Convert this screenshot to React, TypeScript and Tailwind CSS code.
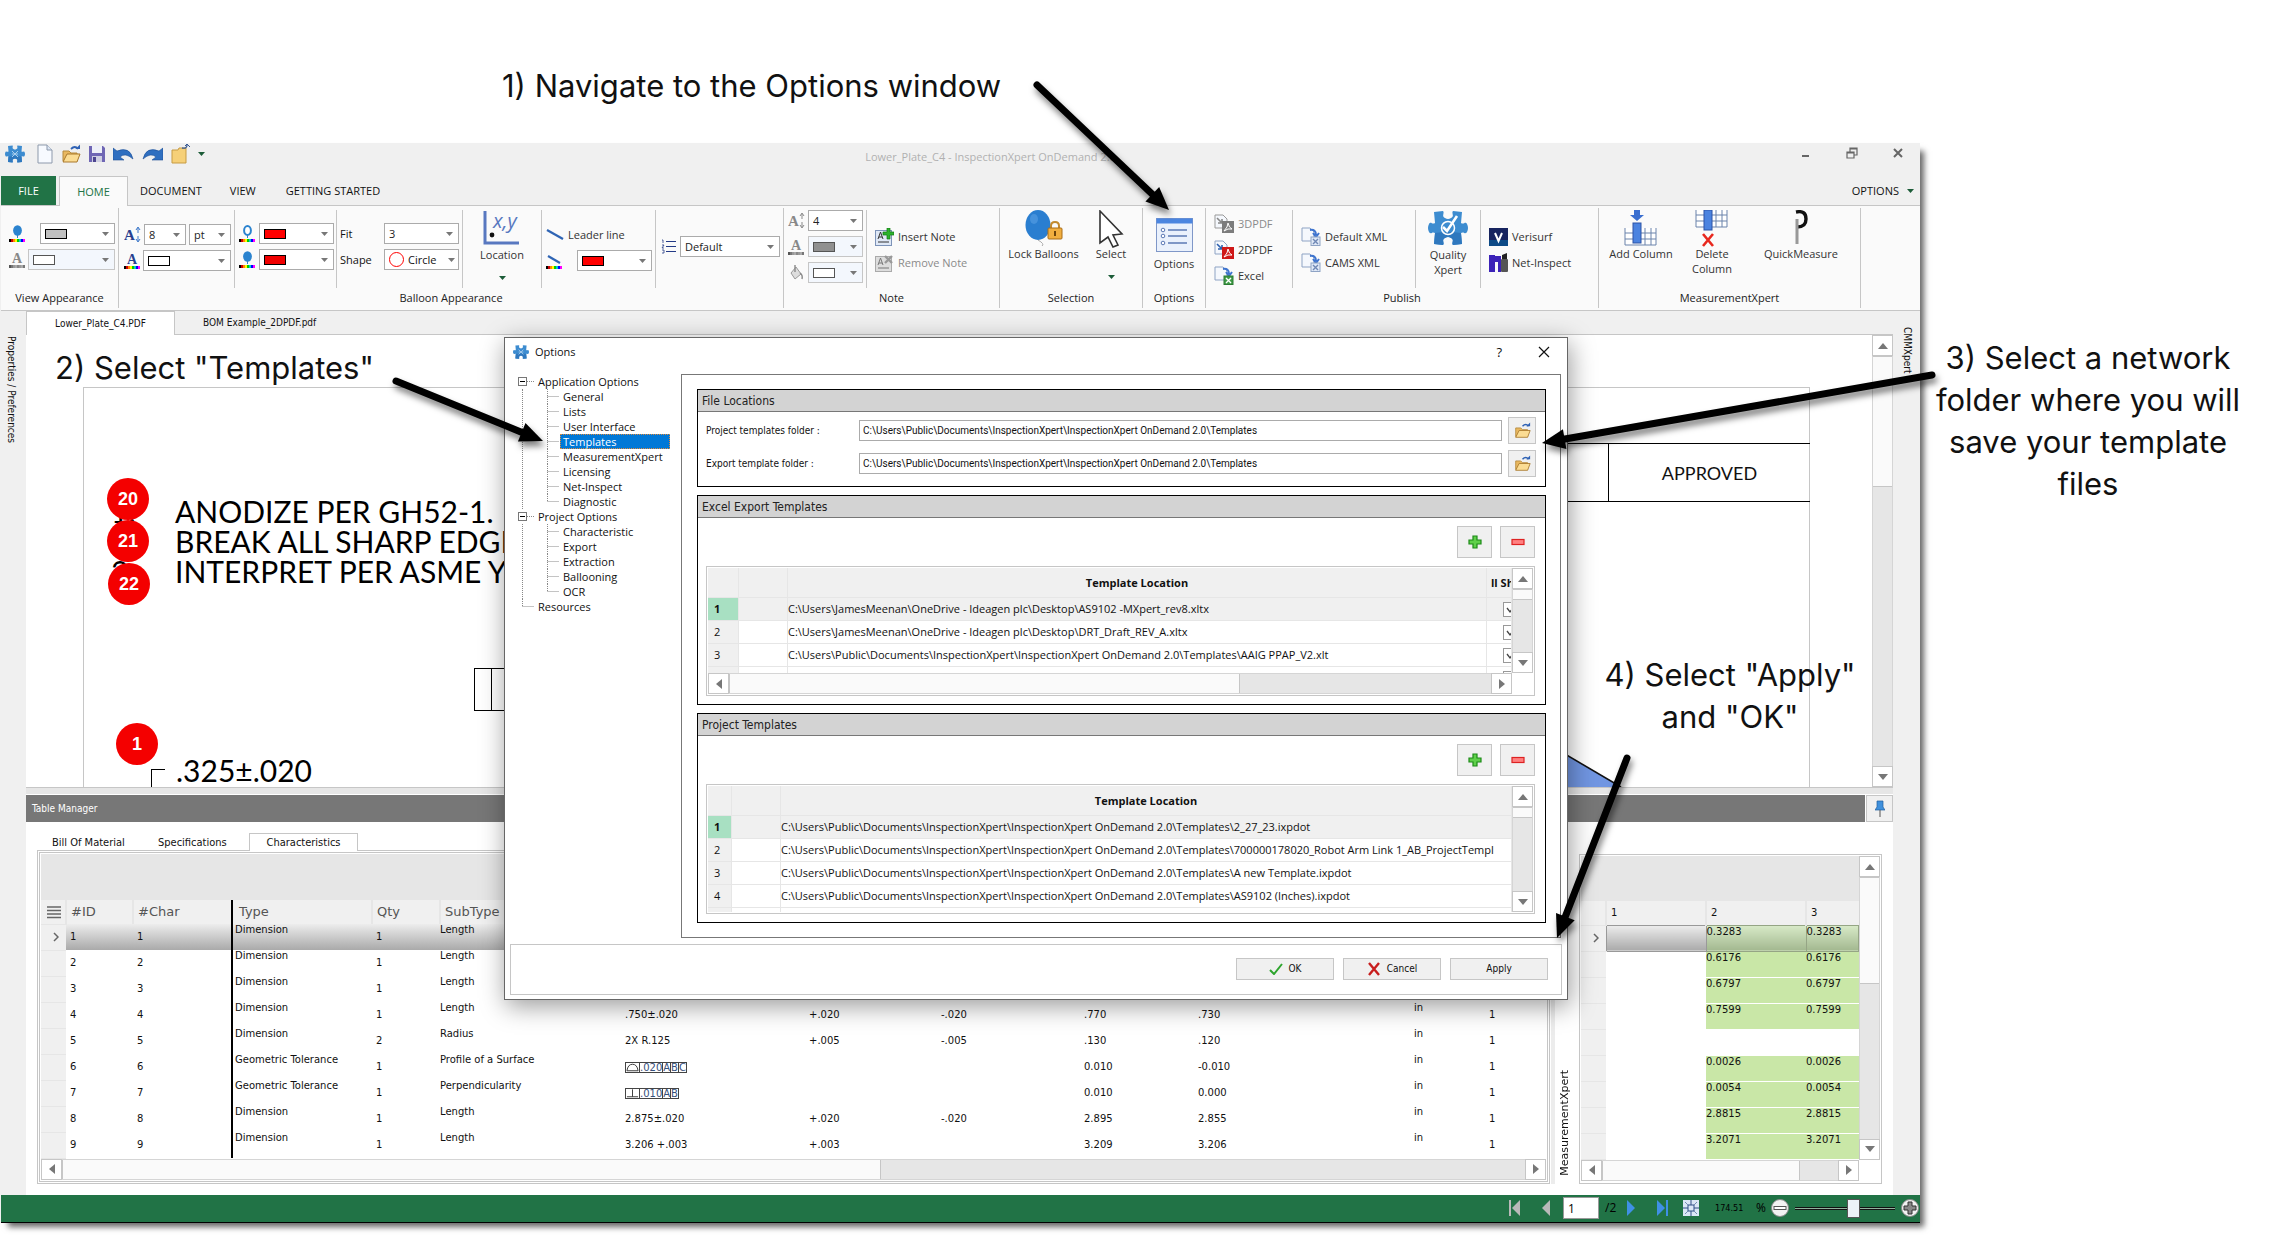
import type { ReactNode } from 'react'
import { clsx } from 'clsx'

const SEGOE = "font-['Open_Sans','Noto_Sans',sans-serif]"
const TAHOMA = "font-['DejaVu_Sans_Condensed','DejaVu_Sans',sans-serif]"
const VERDANA = "font-['DejaVu_Sans',sans-serif]"
const NOTE = "font-['Inter','Open_Sans',sans-serif] text-[31px] leading-[42px]"
const GOTHIC = "font-['Lato',sans-serif]"

/* ---------- icons ---------- */

function PuzzleIcon({ className, check }: { className: string; check?: boolean }) {
  return (
    <svg viewBox="0 0 40 34" className={className}>
      <path
        d="M6 1 L15 0 C17 2 13 5 17 7 Q20 9 23 7 C27 5 23 2 25 0 L34 1 L33 12 C36 14 37 10 39 13 Q41 17 39 21 C37 24 36 20 33 22 L34 33 L25 34 C23 32 27 29 23 27 Q20 25 17 27 C13 29 17 32 15 34 L6 33 L7 22 C4 20 3 24 1 21 Q-1 17 1 13 C3 10 4 14 7 12 Z"
        fill="#3d8cd0"
      />
      <path d="M6 33 L7 22 Q20 20 33 22 L34 33 L25 34 C23 32 27 29 23 27 Q20 25 17 27 C13 29 17 32 15 34 Z" fill="#2f78be" />
      {check ? (
        <g fill="none" stroke="#fff">
          <circle cx="20" cy="17" r="6.5" strokeWidth="1.5" />
          <path d="M15 16 L19 20 L29 5" strokeWidth="2.6" />
        </g>
      ) : (
        <path d="M14 11 L26 23 M26 11 L14 23 M14 17 H26" stroke="#a9cdec" strokeWidth="2" />
      )}
    </svg>
  )
}

function NewFileIcon() {
  return (
    <svg viewBox="0 0 16 20" className="h-5 w-4">
      <path d="M1 1 H10 L15 6 V19 H1 Z" fill="#f7faff" stroke="#8d99ab" />
      <path d="M10 1 V6 H15" fill="#dbe6f5" stroke="#8d99ab" />
    </svg>
  )
}

function OpenIcon({ className = 'h-5 w-5' }: { className?: string }) {
  return (
    <svg viewBox="0 0 20 20" className={className}>
      <path d="M2 7 H8 L10 9 H16 V17 H2 Z" fill="#e9b860" stroke="#b68a3c" />
      <path d="M2 18 L6 10 H19 L16 18 Z" fill="#fbdc93" stroke="#a9792c" />
      <path d="M10 5 Q14 1 17 5" fill="none" stroke="#2f62b5" strokeWidth="1.8" />
      <path d="M14.5 5 H19 V0.5 Z" fill="#2f62b5" />
    </svg>
  )
}

function SaveIcon() {
  return (
    <svg viewBox="0 0 16 18" className="h-[18px] w-4">
      <path d="M0 1 H14 L16 3 V17 H0 Z" fill="#6f66b4" />
      <rect x="3" y="1" width="10" height="7" fill="#eef0f8" />
      <rect x="3" y="11" width="10" height="6" fill="#cfcfe2" />
      <rect x="4" y="12" width="3" height="5" fill="#4d4590" />
    </svg>
  )
}

function TurnIcon({ flip }: { flip?: boolean }) {
  return (
    <svg viewBox="0 0 21 14" className={clsx('h-3.5 w-[21px]', flip && '-scale-x-100')}>
      <path d="M0 1 V13 H11 L7 10 Q12 5 20 12 Q17 -1 4 4 Z" fill="#2f6fc0" stroke="#1e4f96" strokeWidth="0.6" />
    </svg>
  )
}

function ExportFolderIcon() {
  return (
    <svg viewBox="0 0 19 20" className="h-5 w-[19px]">
      <path d="M1 6 H7 L8 4 H15 V19 H1 Z" fill="#f6d078" stroke="#c79b43" />
      <path d="M11 4 Q16 5 16 1" fill="none" stroke="#3a5b95" strokeWidth="1.3" />
      <path d="M14 2 L16 0 L19 3" fill="none" stroke="#3a5b95" />
    </svg>
  )
}

const RAINBOW = ['#000', '#c00', '#f80', '#ff0', '#0c0', '#0cc', '#00f', '#f0f']
const GRAYS = ['#555', '#777', '#999', '#aaa', '#888', '#999', '#aaa', '#777']

function Stripe({ gray }: { gray?: boolean }) {
  return (
    <>
      {(gray ? GRAYS : RAINBOW).map((c, i) => (
        <rect key={i} x={i * 2} y="14" width="2" height="3" fill={c} />
      ))}
    </>
  )
}

function BalloonColorIcon({ hollow }: { hollow?: boolean }) {
  return (
    <svg viewBox="0 0 16 17" className="h-[17px] w-4 shrink-0">
      <ellipse cx="8.5" cy="5.5" rx={hollow ? 3.4 : 4.4} ry={hollow ? 4.4 : 5.2} fill={hollow ? '#fff' : '#2b83cf'} stroke="#2b83cf" strokeWidth={hollow ? 2 : 0} />
      <path d="M8.5 10 V13" stroke="#2b83cf" />
      <Stripe />
    </svg>
  )
}

function LetterColorIcon({ gray }: { gray?: boolean }) {
  return (
    <svg viewBox="0 0 16 17" className="h-[17px] w-4 shrink-0">
      <text x="3" y="12" fontSize="14" fontWeight="bold" fontFamily="Liberation Serif, serif" fill={gray ? '#888' : '#27408f'}>
        A
      </text>
      <Stripe gray={gray} />
    </svg>
  )
}

function LetterSizeIcon({ gray }: { gray?: boolean }) {
  const c = gray ? '#888' : '#27408f'
  return (
    <svg viewBox="0 0 17 17" className="h-[17px] w-[17px] shrink-0">
      <text x="0" y="14" fontSize="15" fontWeight="bold" fontFamily="Liberation Serif, serif" fill={c}>
        A
      </text>
      <path d="M14 2 V7 M14 10 V15 M12 4 L14 1 L16 4 M12 13 L14 16 L16 13" fill="none" stroke={gray ? '#888' : '#3a76c9'} />
    </svg>
  )
}

function LineIcon({ color }: { color?: boolean }) {
  return (
    <svg viewBox="0 0 18 17" className="h-[17px] w-[18px] shrink-0">
      <path d={color ? 'M2 4 L14 11' : 'M1 4 L17 13'} stroke="#2e64b4" strokeWidth="2.2" />
      {color && <Stripe />}
    </svg>
  )
}

function ListIcon() {
  return (
    <svg viewBox="0 0 15 15" className="h-[15px] w-[15px] shrink-0">
      <path d="M5 2.5 H15 M5 7.5 H15 M5 12.5 H15" stroke="#233a86" />
      <path d="M1 1 H2 V4 M1 6 H3 L1 9 H3 M1 11 H3 V14 H1" fill="none" stroke="#233a86" strokeWidth="0.8" />
    </svg>
  )
}

function BucketIcon() {
  return (
    <svg viewBox="0 0 16 17" className="h-[17px] w-4 shrink-0">
      <path d="M3 9 L8 3 L13 10 L7 15 Z" fill="#ddd" stroke="#999" />
      <path d="M7 1 V8 M12 9 Q15 11 14 15" fill="none" stroke="#888" strokeWidth="1.4" />
    </svg>
  )
}

function NoteIcon({ remove }: { remove?: boolean }) {
  return (
    <svg viewBox="0 0 19 18" className="h-[18px] w-[19px] shrink-0">
      <rect x="0.5" y="2.5" width="16" height="15" fill={remove ? '#ddd' : '#dfe8f6'} stroke={remove ? '#aaa' : '#7d93b8'} />
      <path d="M3 11 L5.5 4 L8 11 M4 9 H7 M3 14 H14" fill="none" stroke={remove ? '#777' : '#333'} />
      {remove ? (
        <path d="M10 2 L17 9 M17 2 L10 9" stroke="#999" strokeWidth="2.4" />
      ) : (
        <path d="M12 0 H15 V4 H19 V7 H15 V11 H12 V7 H8 V4 H12 Z" fill="#2db32d" stroke="#127a12" strokeWidth="0.7" />
      )}
    </svg>
  )
}

function LocationIcon() {
  return (
    <svg viewBox="0 0 38 34" className="h-[34px] w-[38px]">
      <path d="M2 0 V32 H36" fill="none" stroke="#5878c0" strokeWidth="3" />
      <circle cx="9" cy="24" r="2.4" fill="#111" />
      <text x="10" y="17" fontSize="20" fontStyle="italic" fontFamily="Open Sans, sans-serif" fill="#5878c0">
        x,y
      </text>
    </svg>
  )
}

function LockBalloonsIcon() {
  return (
    <svg viewBox="0 0 38 36" className="h-9 w-[38px]">
      <path d="M13 30 Q20 34 17 36" fill="none" stroke="#aaa" />
      <ellipse cx="13" cy="15" rx="12.5" ry="15" fill="#2a7ed0" />
      <ellipse cx="9" cy="9" rx="4" ry="5" fill="#4692dc" />
      <path d="M26 19 V16 Q26 12 30 12 Q34 12 34 16 V19" fill="none" stroke="#c28a2e" strokeWidth="2" />
      <rect x="23" y="18" width="14" height="11" rx="1" fill="#f1ae3f" stroke="#a96c17" />
      <path d="M30 21 V26" stroke="#6c430b" strokeWidth="2" />
    </svg>
  )
}

function CursorIcon() {
  return (
    <svg viewBox="0 0 26 38" className="h-[38px] w-[26px]">
      <path d="M2 1 L24 24 L15 25 L20 35 L15 37 L10 27 L2 33 Z" fill="#fff" stroke="#333" strokeWidth="1.6" />
    </svg>
  )
}

function OptionsIcon() {
  return (
    <svg viewBox="0 0 37 34" className="h-[34px] w-[37px]">
      <rect x="0.5" y="0.5" width="36" height="33" fill="#eaf1fc" stroke="#7f97c8" />
      <rect x="0.5" y="0.5" width="36" height="5" fill="#4c86e0" />
      {[12, 18, 25].map((y) => (
        <g key={y}>
          <circle cx="7" cy={y} r="1.8" fill="#fff" stroke="#5b78b4" />
          <path d={`M12 ${y} H31`} stroke="#5b78b4" strokeWidth="1.5" />
        </g>
      ))}
    </svg>
  )
}

function FileExportIcon({ kind }: { kind: 'pdf' | 'pdfGray' | 'excel' | 'xml' }) {
  const pdf = kind === 'pdf' || kind === 'pdfGray'
  return (
    <svg viewBox="0 0 20 19" className="h-[19px] w-5 shrink-0">
      <path d="M1 1 H9 L13 5 V14 H1 Z" fill="#f5f8fd" stroke={kind === 'pdfGray' ? '#999' : '#8ea3c4'} />
      {pdf ? (
        <>
          <path d="M3 4 L8 9 M8 5 V9 H4" fill="none" stroke={kind === 'pdf' ? '#2b5fae' : '#888'} strokeWidth="1.6" />
          <rect x="8" y="7" width="12" height="12" fill={kind === 'pdf' ? '#cf1717' : '#7c7c7c'} />
          <path d="M10 17 Q14 13 14 9 Q15 14 18 15 Q14 14 10 17" fill="none" stroke="#fff" />
        </>
      ) : (
        <>
          <path d="M9 3 Q15 2 15 8 M12 6 L15 10 L18 6" fill="none" stroke="#3e74cf" strokeWidth="2" />
          <rect x="10" y="10" width="9" height="8.5" fill={kind === 'excel' ? '#3f9b46' : '#dfe8f6'} stroke={kind === 'excel' ? '#2c7a33' : '#8ea3c4'} />
          <path d="M12 12 L17 17 M17 12 L12 17" stroke={kind === 'excel' ? '#fff' : '#6f88b5'} strokeWidth="1.4" />
        </>
      )}
    </svg>
  )
}

function VerisurfIcon() {
  return (
    <svg viewBox="0 0 19 18" className="h-[18px] w-[19px] shrink-0">
      <rect width="19" height="18" fill="#17245f" />
      <rect y="12" width="19" height="6" fill="#0d4a86" />
      <path d="M6 5 L9.5 13 L13 5" fill="none" stroke="#fff" strokeWidth="2" />
    </svg>
  )
}

function NetInspectIcon() {
  return (
    <svg viewBox="0 0 19 19" className="h-[19px] w-[19px] shrink-0">
      <path d="M0 2 H6 V19 H0 Z M6 3 H12 V19 H9 V9 H6 Z" fill="#3c23b8" />
      <rect x="12" y="6" width="7" height="13" rx="1" fill="#555" />
      <path d="M13 6 V2 L18 0 V6 Z" fill="#222" />
    </svg>
  )
}

function ColumnIcon({ remove }: { remove?: boolean }) {
  const y = remove ? 0 : 18
  return (
    <svg viewBox="0 0 34 37" className="h-[37px] w-[34px]">
      <rect x="1" y={y} width="31" height="17" fill="#fff" />
      <path d={`M1 ${y} V${y + 17} H32 V${y} M1 ${y + 5} H32 M1 ${y + 11} H32 M21 ${y} V${y + 17} M27 ${y} V${y + 17}`} fill="none" stroke="#6b83ab" />
      <rect x="9" y={remove ? 0 : 13} width="8" height="20" fill="#4b83e0" stroke="#2c53a5" />
      {remove ? <path d="M8 24 L18 36 M18 24 L8 36" stroke="#e8281e" strokeWidth="2.6" /> : <path d="M10 0 H16 V5 H20 L13 11 L6 5 H10 Z" fill="#3b6fd0" />}
    </svg>
  )
}

function QuickMeasureIcon() {
  return (
    <svg viewBox="0 0 16 37" className="h-[37px] w-4">
      <path d="M3 2 Q13 0 13 9 Q13 17 4 17" fill="none" stroke="#111" strokeWidth="3.4" />
      <path d="M4 9 V34" stroke="#999" strokeWidth="3" />
    </svg>
  )
}

function PlusIcon() {
  return (
    <svg viewBox="0 0 14 14" className="h-3.5 w-3.5">
      <path d="M5 1 H9 V5 H13 V9 H9 V13 H5 V9 H1 V5 H5 Z" fill="#5fd04a" stroke="#1c8a17" strokeWidth="1.2" />
    </svg>
  )
}

function MinusIcon() {
  return (
    <svg viewBox="0 0 14 14" className="h-3.5 w-3.5">
      <rect x="1" y="4.5" width="12" height="5" fill="#ff8080" stroke="#dd2222" strokeWidth="1.2" />
    </svg>
  )
}

function PinIcon() {
  return (
    <svg viewBox="0 0 10 17" className="h-[17px] w-2.5">
      <path d="M2 1 H8 V7 L10 10 H0 L2 7 Z" fill="#3f90dc" stroke="#215f9e" strokeWidth="0.7" />
      <path d="M5 10 V17" stroke="#555" />
    </svg>
  )
}

/* ---------- shared controls ---------- */

const TRIANGLES = {
  up: 'M0 8 L5 2 L10 8 Z',
  down: 'M0 2 L5 8 L10 2 Z',
  left: 'M8 0 L2 5 L8 10 Z',
  right: 'M2 0 L8 5 L2 10 Z',
}

function ScrollButton({ dir }: { dir: keyof typeof TRIANGLES }) {
  return (
    <button aria-label={`Scroll ${dir}`} className="flex h-[21px] w-[21px] shrink-0 items-center justify-center border border-[#c6c6c6] bg-white">
      <svg viewBox="0 0 10 10" className="h-2.5 w-2.5">
        <path d={TRIANGLES[dir]} fill="#777" />
      </svg>
    </button>
  )
}

function ScrollBar({ vertical, thumb, className }: { vertical?: boolean; thumb: string; className?: string }) {
  return (
    <div className={clsx('flex shrink-0 bg-[#e6e6e6]', vertical ? 'w-[21px] flex-col' : 'h-[21px]', className)}>
      <ScrollButton dir={vertical ? 'up' : 'left'} />
      <div className={clsx('min-h-0 min-w-0 flex-1 border-[#d5d5d5]', vertical ? 'border-x' : 'border-y')}>
        <div className={clsx('border-[#c6c6c6] bg-[#fafafa]', vertical ? 'w-full border-y' : 'h-full border-x', thumb)} />
      </div>
      <ScrollButton dir={vertical ? 'down' : 'right'} />
    </div>
  )
}

function Caret({ className = 'fill-[#777]' }: { className?: string }) {
  return (
    <svg viewBox="0 0 7 4" className={clsx('pointer-events-none h-1 w-[7px] shrink-0', className)}>
      <path d="M0 0 H7 L3.5 4 Z" />
    </svg>
  )
}

function TextCombo({ label, value, className }: { label: string; value: string; className: string }) {
  return (
    <div className={clsx('flex h-[21px] items-center border border-[#ababab] bg-white pr-[5px]', className)}>
      <select aria-label={label} className="h-full min-w-0 flex-1 appearance-none bg-transparent pl-1 text-[11px] text-[#222] outline-none">
        <option>{value}</option>
      </select>
      <Caret />
    </div>
  )
}

function ColorCombo({ label, color, className = 'w-[75px]', disabled }: { label: string; color: string; className?: string; disabled?: boolean }) {
  return (
    <button
      aria-label={label}
      className={clsx('flex h-[21px] shrink-0 items-center justify-between border pr-[5px] pl-1', disabled ? 'border-[#c6c6c6] bg-[#f3f7fd]' : 'border-[#ababab] bg-white', className)}
    >
      <span className={clsx('h-2.5 w-[22px] border', color, disabled ? 'border-[#555]' : 'border-black')} />
      <Caret />
    </button>
  )
}

/* ---------- ribbon ---------- */

function Group({ label, className, children }: { label: string; className: string; children: ReactNode }) {
  return (
    <section className={clsx('my-0.5 flex shrink-0 flex-col border-r border-[#c6c6c6]', className)}>
      <div className="mt-0.5 flex h-[78px]">{children}</div>
      <h2 className="text-center leading-5 text-[#222]">{label}</h2>
    </section>
  )
}

function Cell({ className, children }: { className: string; children: ReactNode }) {
  return <div className={clsx('flex shrink-0 flex-col gap-[5px] border-[#c6c6c6]', className)}>{children}</div>
}

function Row({ className = 'gap-[4px]', children }: { className?: string; children: ReactNode }) {
  return <div className={clsx('flex h-[21px] items-center', className)}>{children}</div>
}

function SmallButton({ icon, children, muted }: { icon: ReactNode; children: string; muted?: boolean }) {
  return (
    <button className={clsx('flex h-[21px] items-center gap-1 whitespace-nowrap', muted ? 'text-[#8a8a8a]' : 'text-[#333]')}>
      {icon}
      {children}
    </button>
  )
}

function BigButton({ icon, label, caret, className }: { icon: ReactNode; label: string; caret?: boolean; className: string }) {
  return (
    <button className={clsx('flex h-[78px] shrink-0 flex-col items-center leading-[15px] text-[#333]', className)}>
      <span className="flex h-9 items-start justify-center">{icon}</span>
      <span>{label}</span>
      {caret && <Caret className="mt-3.5 fill-[#1c5c38]" />}
    </button>
  )
}

function Ribbon() {
  return (
    <div className="flex h-[106px] overflow-hidden border-y border-[#c6c6c6] bg-[#fafafa] text-[11px] leading-4">
      <Group label="View Appearance" className="w-[118px]">
        <Cell className="w-full pt-[13px] pr-[3px] pl-2">
          <Row className="justify-between">
            <BalloonColorIcon />
            <ColorCombo label="Balloon colour" color="bg-[#c0c0c0]" />
          </Row>
          <Row className="justify-between">
            <LetterColorIcon gray />
            <ColorCombo label="Letter colour" color="bg-white" className="w-[87px]" disabled />
          </Row>
        </Cell>
      </Group>
      <Group label="Balloon Appearance" className="w-[665px]">
        <Cell className="w-[116px] border-r pt-[14px] pl-[5px]">
          <Row className="gap-[3px]">
            <LetterSizeIcon />
            <TextCombo label="Font size" value="8" className="w-[42px]" />
            <TextCombo label="Unit" value="pt" className="w-[42px]" />
          </Row>
          <Row className="gap-[3px]">
            <LetterColorIcon />
            <ColorCombo label="Font colour" color="bg-white" className="w-[88px]" />
          </Row>
        </Cell>
        <Cell className="w-[102px] border-r pt-[13px] pl-1">
          <Row>
            <BalloonColorIcon hollow />
            <ColorCombo label="Border colour" color="bg-[#ff0000]" />
          </Row>
          <Row>
            <BalloonColorIcon />
            <ColorCombo label="Fill colour" color="bg-[#f00000]" />
          </Row>
        </Cell>
        <Cell className="w-[126px] border-r pt-[13px] pr-[3px] pl-[3px]">
          <Row className="justify-between">
            <span>Fit</span>
            <TextCombo label="Fit" value="3" className="w-[75px]" />
          </Row>
          <Row className="justify-between">
            <span>Shape</span>
            <div className="flex h-[21px] w-[75px] items-center border border-[#ababab] bg-white pr-[3px] pl-1">
              <span className="h-[15px] w-[15px] shrink-0 rounded-full border border-[#ff0000]" />
              <select aria-label="Shape" className="h-full min-w-0 flex-1 appearance-none bg-transparent pl-1 text-[11px] outline-none">
                <option>Circle</option>
              </select>
              <Caret />
            </div>
          </Row>
        </Cell>
        <Cell className="w-[79px] border-r pt-[1px]">
          <BigButton icon={<LocationIcon />} label="Location" caret className="w-full" />
        </Cell>
        <Cell className="w-[114px] border-r pt-[14px] pr-[3px] pl-1">
          <SmallButton icon={<LineIcon />}>Leader line</SmallButton>
          <Row className="justify-between">
            <LineIcon color />
            <ColorCombo label="Leader colour" color="bg-[#ff0000]" />
          </Row>
        </Cell>
        <Cell className="w-[127px] pt-[26px] pl-[5px]">
          <Row>
            <ListIcon />
            <TextCombo label="Style" value="Default" className="w-[100px]" />
          </Row>
        </Cell>
      </Group>
      <Group label="Note" className="w-[216px]">
        <Cell className="w-[83px] border-r pl-1">
          <Row className="gap-[3px]">
            <LetterSizeIcon gray />
            <TextCombo label="Note size" value="4" className="w-[55px]" />
          </Row>
          <Row>
            <LetterColorIcon gray />
            <ColorCombo label="Note colour" color="bg-[#909090]" className="w-[55px]" disabled />
          </Row>
          <Row>
            <BucketIcon />
            <ColorCombo label="Note fill" color="bg-white" className="w-[55px]" disabled />
          </Row>
        </Cell>
        <Cell className="w-[132px] pt-4 pl-2">
          <SmallButton icon={<NoteIcon />}>Insert Note</SmallButton>
          <SmallButton icon={<NoteIcon remove />} muted>
            Remove Note
          </SmallButton>
        </Cell>
      </Group>
      <Group label="Selection" className="w-[143px]">
        <BigButton icon={<LockBalloonsIcon />} label="Lock Balloons" className="ml-1 w-[79px]" />
        <BigButton icon={<CursorIcon />} label="Select" caret className="w-[56px]" />
      </Group>
      <Group label="Options" className="w-[63px]">
        <button className="flex w-full flex-col items-center gap-1 pt-2 text-[#333]">
          <OptionsIcon />
          Options
        </button>
      </Group>
      <Group label="Publish" className="w-[393px]">
        <Cell className="w-[87px] border-r pt-[3px] pl-2">
          <SmallButton icon={<FileExportIcon kind="pdfGray" />} muted>
            3DPDF
          </SmallButton>
          <SmallButton icon={<FileExportIcon kind="pdf" />}>2DPDF</SmallButton>
          <SmallButton icon={<FileExportIcon kind="excel" />}>Excel</SmallButton>
        </Cell>
        <Cell className="w-[123px] border-r pt-4 pl-2">
          <SmallButton icon={<FileExportIcon kind="xml" />}>Default XML</SmallButton>
          <SmallButton icon={<FileExportIcon kind="xml" />}>CAMS XML</SmallButton>
        </Cell>
        <Cell className="w-[65px] border-r pt-[1px]">
          <BigButton icon={<PuzzleIcon className="h-[34px] w-10" check />} label="Quality Xpert" className="w-full px-2" />
        </Cell>
        <Cell className="w-[117px] pt-4 pl-2">
          <SmallButton icon={<VerisurfIcon />}>Verisurf</SmallButton>
          <SmallButton icon={<NetInspectIcon />}>Net-Inspect</SmallButton>
        </Cell>
      </Group>
      <Group label="MeasurementXpert" className="w-[262px]">
        <BigButton icon={<ColumnIcon />} label="Add Column" className="w-[84px]" />
        <BigButton icon={<ColumnIcon remove />} label="Delete Column" className="w-[58px]" />
        <BigButton icon={<QuickMeasureIcon />} label="QuickMeasure" className="ml-5 w-[80px]" />
      </Group>
    </div>
  )
}

function TitleBar() {
  return (
    <header className="flex h-[33px] items-start">
      <div className="flex w-52 items-center gap-2 pt-px pl-1">
        <PuzzleIcon className="mr-1 h-[18px] w-5" />
        <NewFileIcon />
        <OpenIcon />
        <SaveIcon />
        <TurnIcon />
        <TurnIcon flip />
        <ExportFolderIcon />
        <Caret className="fill-[#1c5c38]" />
      </div>
      <h1 className="flex-1 pt-1.5 pr-3 text-center text-[11px] leading-4 text-[#b0b0b0]">Lower_Plate_C4 - InspectionXpert OnDemand 2.0</h1>
      <div className="flex w-[136px] items-center gap-[34px] pt-0.5 pl-4">
        <button aria-label="Minimize" className="flex h-4 w-3 items-center">
          <svg viewBox="0 0 12 12" className="h-3 w-3">
            <path d="M2 9 H9" stroke="#666" strokeWidth="2" />
          </svg>
        </button>
        <button aria-label="Restore">
          <svg viewBox="0 0 12 12" className="h-3 w-3">
            <path d="M1 5 H8 V11 H1 Z M4 5 V1 H11 V8 H8 M1 6 H8 M4 2 H11" fill="none" stroke="#666" strokeWidth="1.2" />
          </svg>
        </button>
        <button aria-label="Close">
          <svg viewBox="0 0 12 12" className="h-3 w-3">
            <path d="M2 2 L10 10 M10 2 L2 10" stroke="#666" strokeWidth="2" />
          </svg>
        </button>
      </div>
    </header>
  )
}

function RibbonTabs() {
  return (
    <nav className="-mb-px flex h-[30px] items-stretch text-[11px]">
      <button className="w-[55px] bg-[#217346] text-white">FILE</button>
      <button className="z-10 ml-[3px] w-[69px] border border-b-0 border-[#c6c6c6] bg-[#fafafa] text-[#217346]">HOME</button>
      <button className="ml-3">DOCUMENT</button>
      <button className="ml-[28px]">VIEW</button>
      <button className="ml-[30px]">GETTING STARTED</button>
      <button className="mr-1.5 ml-auto flex items-center gap-2">
        OPTIONS
        <Caret className="fill-[#1c5c38]" />
      </button>
    </nav>
  )
}

/* ---------- drawing ---------- */

const BALLOONS = [
  { n: 20, pos: 'left-[81px] top-[143px]' },
  { n: 21, pos: 'left-[81px] top-[185px]' },
  { n: 22, pos: 'left-[82px] top-[228px]' },
  { n: 1, pos: 'left-[90px] top-[388px]' },
]

const NOTES = [
  ['1.', 'ANODIZE PER GH52-1.'],
  ['', 'BREAK ALL SHARP EDGES'],
  ['3.', 'INTERPRET PER ASME Y14.5'],
]

function Drawing() {
  return (
    <div className="flex min-h-[453px] flex-1 border-b border-[#c6c6c6] bg-white">
      <div className="relative flex-1 overflow-hidden">
        {/* sheet frame */}
        <div className="absolute top-[52px] right-[62px] bottom-0 left-[57px] border border-b-0 border-[#c6c6c6]" />
        <ol className={clsx('absolute top-[161px] left-[85px] text-[30px] leading-[30px] text-black', GOTHIC)}>
          {NOTES.map(([num, text]) => (
            <li key={text} className="flex whitespace-nowrap">
              <span className="w-[64px]">{num}</span>
              {text}
            </li>
          ))}
        </ol>
        <p className={clsx('absolute top-[420px] left-[150px] text-[30px] leading-[30px] text-black', GOTHIC)}>.325±.020</p>
        <div className="absolute top-[434px] left-[125px] h-5 w-3.5 border-t border-l border-black" />
        <div className="absolute top-[333px] left-[448px] flex h-[43px] w-[60px] border border-black">
          <div className="w-[17px] border-r border-black" />
        </div>
        {BALLOONS.map((b) => (
          <span key={b.n} className={clsx("absolute flex h-[42px] w-[42px] items-center justify-center rounded-full bg-[#f40000] font-['Liberation_Sans',sans-serif] text-[18px] font-bold text-white", b.pos)}>
            {b.n}
          </span>
        ))}
        {/* title block */}
        <div className="absolute top-[108px] right-[62px] flex h-[59px] w-[400px] border-y border-black">
          <div className={clsx('ml-auto flex w-[202px] items-center justify-center border-l border-black text-[18px]', GOTHIC)}>APPROVED</div>
        </div>
        <svg viewBox="0 0 120 70" className="absolute right-[250px] bottom-0 h-[70px] w-[120px]">
          <path d="M0 0 L119 70 H0 Z" fill="#7196e2" />
          <path d="M0 0 L119 70" stroke="#111" strokeWidth="1.6" />
        </svg>
      </div>
      <ScrollBar vertical thumb="h-[32%]" />
    </div>
  )
}

/* ---------- table manager ---------- */

type CharRow = [string, string, string, string, ReactNode, string, string, string, string]

function Frame({ symbol, cells }: { symbol: 'surface' | 'perp'; cells: string[] }) {
  return (
    <span className="flex h-[11px] w-max border border-r-0 border-[#444] leading-[9px] text-[#36507c]">
      <svg viewBox="0 0 14 9" className="h-[9px] w-3.5 border-r border-[#444]">
        <path d={symbol === 'surface' ? 'M1 8 Q2 1 7 1 Q12 1 13 8 Z' : 'M1 8 H13 M7 0 V8'} fill="none" stroke="#333" />
      </svg>
      {cells.map((c) => (
        <span key={c} className="border-r border-[#444]">
          {c}
        </span>
      ))}
    </span>
  )
}

const CHARS: CharRow[] = [
  ['Dimension', '1', 'Length', '1', '', '', '', '', ''],
  ['Dimension', '1', 'Length', '2', '', '', '', '', ''],
  ['Dimension', '1', 'Length', '3', '', '', '', '', ''],
  ['Dimension', '1', 'Length', '4', '.750±.020', '+.020', '-.020', '.770', '.730'],
  ['Dimension', '2', 'Radius', '5', '2X R.125', '+.005', '-.005', '.130', '.120'],
  ['Geometric Tolerance', '1', 'Profile of a Surface', '6', <Frame symbol="surface" cells={['.020', 'A', 'B', 'C']} />, '', '', '0.010', '-0.010'],
  ['Geometric Tolerance', '1', 'Perpendicularity', '7', <Frame symbol="perp" cells={['.010', 'A', 'B']} />, '', '', '0.010', '0.000'],
  ['Dimension', '1', 'Length', '8', '2.875±.020', '+.020', '-.020', '2.895', '2.855'],
  ['Dimension', '1', 'Length', '9', '3.206 +.003', '+.003', '', '3.209', '3.206'],
]

const MEASURES = ['0.3283', '0.6176', '0.6797', '0.7599', '', '0.0026', '0.0054', '2.8815', '3.2071']

const HANDLE = 'border-y border-[#e6e6e6] bg-[#f0f0f0]'

function CharTable() {
  return (
    <table className={clsx('w-full table-fixed border-collapse text-[10px] leading-3', VERDANA)}>
      <colgroup>
        <col className="w-[25px]" />
        <col className="w-[67px]" />
        <col className="w-[99px]" />
        <col className="w-[140px]" />
        <col className="w-[68px]" />
        <col className="w-[181px]" />
        <col className="w-[184px]" />
        <col className="w-[132px]" />
        <col className="w-[143px]" />
        <col className="w-[114px]" />
        <col className="w-[216px]" />
        <col className="w-[75px]" />
        <col />
      </colgroup>
      <thead>
        <tr className="h-[24px] bg-[#f0f0f0] text-left text-[13px] text-[#555]">
          <th className="p-0">
            <svg viewBox="0 0 14 14" className="ml-1.5 h-3.5 w-3.5">
              <path d="M0 2 H14 M0 5.5 H14 M0 9 H14 M0 12.5 H14" stroke="#666" strokeWidth="1.5" />
            </svg>
          </th>
          <th className="border-l-2 border-[#e6e6e6] p-0 pl-1 font-normal">#ID</th>
          <th className="border-l-2 border-[#e6e6e6] p-0 pl-1 font-normal">#Char</th>
          <th className="border-l-2 border-black p-0 pl-1.5 font-normal">Type</th>
          <th className="border-l-2 border-[#e6e6e6] p-0 pl-1 font-normal">Qty</th>
          <th className="border-l-2 border-[#e6e6e6] p-0 pl-1 font-normal">SubType</th>
          <th colSpan={7} />
        </tr>
      </thead>
      <tbody>
        {CHARS.map(([type, qty, sub, id, nominal, plus, minus, upper, lower], i) => (
          <tr key={id} className={clsx('h-[26px] whitespace-nowrap', i === 0 && 'bg-linear-to-b from-[#ededed] to-[#aaaaaa]')}>
            <td className={clsx('p-0 text-center', HANDLE)}>
              {i === 0 && (
                <svg viewBox="0 0 6 10" className="ml-3 h-2.5 w-1.5">
                  <path d="M1 1 L5 5 L1 9" fill="none" stroke="#666" strokeWidth="1.5" />
                </svg>
              )}
            </td>
            <td className="p-0 pl-1">{id}</td>
            <td className="p-0 pl-1">{id}</td>
            <td className="border-l-2 border-black p-0 pl-0.5 align-top">{type}</td>
            <td className="p-0 pl-1">{qty}</td>
            <td className="p-0 align-top">{sub}</td>
            <td className="p-0 pl-1">{nominal}</td>
            <td className="p-0 pl-1">{plus}</td>
            <td className="p-0 pl-1">{minus}</td>
            <td className="p-0 pl-1">{upper}</td>
            <td className="p-0 pl-1">{lower}</td>
            <td className="p-0 pl-1 align-top">in</td>
            <td className="p-0 pl-1">1</td>
          </tr>
        ))}
      </tbody>
    </table>
  )
}

function MeasureTable() {
  return (
    <table className={clsx('w-full table-fixed border-collapse text-[10px] leading-3', VERDANA)}>
      <colgroup>
        <col className="w-[25px]" />
        <col className="w-[100px]" />
        <col className="w-[100px]" />
        <col />
      </colgroup>
      <thead>
        <tr className="h-[24px] bg-[#f0f0f0] text-left">
          <th />
          {['1', '2', '3'].map((n) => (
            <th key={n} className="border-l-2 border-[#e6e6e6] p-0 pl-1 font-normal">
              {n}
            </th>
          ))}
        </tr>
      </thead>
      <tbody>
        {MEASURES.map((m, i) => {
          const fill = i === 0 ? 'border border-[#95a585] bg-linear-to-b from-[#d8eac8] to-[#a3b890]' : m && 'border-y border-white bg-[#c9e7a7]'
          return (
            <tr key={i} className="h-[26px]">
              <td className={clsx('p-0', HANDLE)}>
                {i === 0 && (
                  <svg viewBox="0 0 6 10" className="ml-3 h-2.5 w-1.5">
                    <path d="M1 1 L5 5 L1 9" fill="none" stroke="#666" strokeWidth="1.5" />
                  </svg>
                )}
              </td>
              <td className={clsx('p-0', i === 0 && 'border border-[#999] bg-linear-to-b from-[#ededed] to-[#aaaaaa]')} />
              <td className={clsx('p-0 align-top', fill)}>{m}</td>
              <td className={clsx('p-0 align-top', fill)}>{m}</td>
            </tr>
          )
        })}
      </tbody>
    </table>
  )
}

function TableManager() {
  return (
    <section className="border-t-[6px] border-[#e6e6e6] bg-white">
      <div className="flex h-7 gap-px pt-px">
        <h2 className={clsx('flex-1 bg-[#777] pl-1.5 text-[10px] leading-[27px] text-white', TAHOMA)}>Table Manager</h2>
        <button aria-label="Pin" className="flex w-[27px] items-center justify-center border border-[#c6c6c6] bg-[#f0f0f0]">
          <PinIcon />
        </button>
      </div>
      <div className={clsx('mt-[11px] -mb-px flex h-[18px] pl-[26px] text-[11px]', TAHOMA)}>
        <button className="w-[84px] pt-0.5 text-left whitespace-nowrap">Bill Of Material</button>
        <button className="ml-[22px] w-[91px] pt-0.5 text-left">Specifications</button>
        <button className="z-10 w-[109px] border border-b-0 border-[#c6c6c6] bg-white">Characteristics</button>
      </div>
      <div className="flex pr-[11px] pb-[11px] pl-[11px]">
        <div className="min-w-0 flex-1 border border-[#c6c6c6] p-px">
          <div className="border border-[#c6c6c6] p-px">
            <div className="h-[46px] bg-[#e6e6e6]" />
            <CharTable />
            <ScrollBar thumb="w-[56%]" />
          </div>
        </div>
        <div className="mr-1 ml-px flex w-[24px] items-end border-l-4 border-[#ececec] pb-2">
          <button className={clsx('rotate-180 text-[11px] leading-5 [writing-mode:vertical-rl]', VERDANA)}>MeasurementXpert</button>
        </div>
        <div className="mt-1 w-[303px] shrink-0 border border-[#c6c6c6] p-px">
          <div className="flex">
            <div className="min-w-0 flex-1">
              <div className="h-[45px] bg-[#e6e6e6]" />
              <MeasureTable />
            </div>
            <ScrollBar vertical thumb="h-[41%]" />
          </div>
          <ScrollBar thumb="w-[84%]" className="mr-[21px]" />
        </div>
      </div>
    </section>
  )
}

function NavIcon({ back, end }: { back?: boolean; end?: boolean }) {
  return (
    <button aria-label={back ? 'Back' : 'Forward'} className={clsx('flex', back && '-scale-x-100')}>
      <svg viewBox="0 0 13 16" className="h-4 w-[13px]">
        <path d="M1 0 L9 8 L1 16 Z" fill={back ? '#b9b9b9' : '#3f90e6'} />
        {end && <path d="M11 0 V16" stroke={back ? '#b9b9b9' : '#3f90e6'} strokeWidth="2" />}
      </svg>
    </button>
  )
}

function StatusBar() {
  return (
    <footer className="flex h-7 items-center justify-end border-b border-black bg-[#217346] pr-px text-[12px] text-black">
      <div className="flex gap-[17px]">
        <NavIcon back end />
        <NavIcon back />
      </div>
      <input aria-label="Page" defaultValue="1" className="ml-3 h-[22px] w-9 border border-[#999] bg-white pl-1 text-[12px]" />
      <span className="ml-1.5 w-[21px]">/2</span>
      <div className="flex gap-[17px]">
        <NavIcon />
        <NavIcon end />
      </div>
      <svg viewBox="0 0 16 16" className="mr-4 ml-3.5 h-4 w-4">
        <rect width="16" height="16" fill="#dbe7f6" />
        <path d="M8 0 V5 M8 11 V16 M0 8 H5 M11 8 H16 M5 5 H11 V11 H5 Z" fill="none" stroke="#2e4f86" />
        <path d="M2 2 L5 5 M14 2 L11 5 M2 14 L5 11 M14 14 L11 11" stroke="#2e4f86" strokeWidth="0.6" />
      </svg>
      <span className={clsx('w-[41px] text-[9px]', TAHOMA)}>174.51</span>
      <span className="w-[15px]">%</span>
      <button aria-label="Zoom out">
        <svg viewBox="0 0 18 18" className="h-[18px] w-[18px]">
          <circle cx="9" cy="9" r="8.5" fill="#f2f2f2" stroke="#888" />
          <rect x="3" y="7.5" width="12" height="3" fill="#fff" stroke="#555" />
        </svg>
      </button>
      <div className="mx-1.5 flex h-5 w-[100px] items-center">
        <div className="h-[3px] flex-1 border-y border-[#111] bg-[#8fb39d]" />
        <div className="h-[19px] w-[13px] border border-[#555] bg-[#edf2f8]" />
        <div className="h-[3px] w-[35px] border-y border-[#111] bg-[#8fb39d]" />
      </div>
      <button aria-label="Zoom in">
        <svg viewBox="0 0 18 18" className="h-[18px] w-[18px]">
          <circle cx="9" cy="9" r="8.5" fill="#f2f2f2" stroke="#888" />
          <path d="M7 3 H11 V7 H15 V11 H11 V15 H7 V11 H3 V7 H7 Z" fill="#888" stroke="#333" />
        </svg>
      </button>
    </footer>
  )
}

function AppWindow() {
  return (
    <div className={clsx('flex min-w-0 flex-1 flex-col bg-[#f0f0f0] pl-px leading-4 text-[#111] shadow-[6px_6px_6px_-2px_rgba(0,0,0,0.6)]', SEGOE)}>
      <TitleBar />
      <RibbonTabs />
      <Ribbon />
      <div className="flex flex-1">
        <aside className="flex w-[25px] pt-[25px] pl-0.5">
          <button className={clsx('self-start text-[10px] leading-4 [writing-mode:vertical-rl]', TAHOMA)}>Properties / Preferences</button>
        </aside>
        <div className="flex min-w-0 flex-1 flex-col">
          <div className={clsx('flex h-6 items-stretch text-[10px]', TAHOMA)}>
            <button className="w-[149px] border border-b-0 border-[#c6c6c6] bg-white">Lower_Plate_C4.PDF</button>
            <button className="flex-1 border-b border-[#c6c6c6] pl-7 text-left">BOM Example_2DPDF.pdf</button>
          </div>
          <Drawing />
          <TableManager />
        </div>
        <aside className="flex w-[27px] justify-center pt-4">
          <button className={clsx('self-start text-[10px] leading-4 [writing-mode:vertical-rl]', TAHOMA)}>CMMXpert</button>
        </aside>
      </div>
      <StatusBar />
    </div>
  )
}

/* ---------- options dialog ---------- */

const TREE = [
  {
    label: 'Application Options',
    items: ['General', 'Lists', 'User Interface', 'Templates', 'MeasurementXpert', 'Licensing', 'Net-Inspect', 'Diagnostic'],
  },
  { label: 'Project Options', items: ['Characteristic', 'Export', 'Extraction', 'Ballooning', 'OCR'] },
]

function Connector({ last }: { last?: boolean }) {
  return (
    <svg viewBox="0 0 13 15" className="h-[15px] w-[13px] shrink-0">
      <path d={`M0.5 0 V${last ? 8 : 15} M0.5 7.5 H12`} fill="none" stroke="#888" strokeDasharray="1 1" />
    </svg>
  )
}

function Tree() {
  return (
    <ul className="w-[163px] shrink-0 text-[11px] leading-[15px]">
      {TREE.map((g) => (
        <li key={g.label}>
          <div className="flex items-center">
            <button aria-label={`Collapse ${g.label}`} className="flex h-[9px] w-[9px] items-center justify-center border border-[#777] bg-white">
              <span className="h-px w-[5px] bg-black" />
            </button>
            <span className="mr-1 w-[7px] border-t border-dotted border-[#888]" />
            {g.label}
          </div>
          <ul className="ml-1 border-l border-dotted border-[#888] pl-6">
            {g.items.map((t, i) => (
              <li key={t} className="flex">
                <Connector last={i === g.items.length - 1} />
                {t === 'Templates' ? (
                  <a href="#templates" className="w-[110px] bg-[#0078d7] pl-[3px] text-white outline outline-dotted outline-[#e08a3c] -outline-offset-1">
                    {t}
                  </a>
                ) : (
                  <span className="pl-[3px]">{t}</span>
                )}
              </li>
            ))}
          </ul>
        </li>
      ))}
      <li className="flex pl-1">
        <Connector last />
        <span className="pl-[3px]">Resources</span>
      </li>
    </ul>
  )
}

function Panel({ title, children }: { title: string; children: ReactNode }) {
  return (
    <section className="border border-black">
      <h3 className={clsx('h-[22px] border-b border-[#777] bg-[#d3d3d3] pl-1 text-[12px] leading-[22px] text-[#222]', TAHOMA)}>{title}</h3>
      {children}
    </section>
  )
}

const FOLDER = 'C:\\Users\\Public\\Documents\\InspectionXpert\\InspectionXpert OnDemand 2.0\\Templates'

function FolderRow({ id, label }: { id: string; label: string }) {
  return (
    <div className="flex items-center">
      <label htmlFor={id} className={clsx('w-[153px] text-[10px]', TAHOMA)}>
        {label}
      </label>
      <input id={id} defaultValue={FOLDER} className="h-[21px] min-w-0 flex-1 border border-[#ababab] pl-[3px] font-['Roboto',sans-serif] text-[10px]" />
      <button aria-label="Browse" className="ml-1.5 flex h-[27px] w-7 items-center justify-center border border-[#c6c6c6] bg-[#f0f0f0]">
        <OpenIcon className="h-[17px] w-[17px]" />
      </button>
    </div>
  )
}

function AddRemove() {
  return (
    <div className="flex justify-end gap-2">
      {[<PlusIcon />, <MinusIcon />].map((icon, i) => (
        <button key={i} aria-label={i ? 'Remove' : 'Add'} className="flex h-8 w-[35px] items-center justify-center border border-[#c6c6c6] bg-[#f0f0f0]">
          {icon}
        </button>
      ))}
    </div>
  )
}

function TemplateGrid({ paths, sheets }: { paths: string[]; sheets?: boolean }) {
  const line = 'border-r border-b border-[#e6e6e6]'
  return (
    <div className="mt-2 h-[130px] border border-[#c6c6c6] p-px">
      <div className={clsx('flex', sheets ? 'h-[105px]' : 'h-[126px]')}>
        <div className="min-w-0 flex-1 overflow-hidden">
          <table className="w-full table-fixed border-separate border-spacing-0 text-[11px]">
            <colgroup>
              <col className={sheets ? 'w-[31px]' : 'w-[24px]'} />
              <col className="w-[49px]" />
              <col />
              {sheets && <col className="w-[25px]" />}
            </colgroup>
            <thead>
              <tr className="h-[30px] bg-[#f0f0f0]">
                <th className={line} />
                <th className={line} />
                <th className={clsx('p-0 font-bold', line)}>Template Location</th>
                {sheets && <th className={clsx('overflow-hidden p-0 pl-1 text-left whitespace-nowrap', line)}>ll Sh</th>}
              </tr>
            </thead>
            <tbody>
              {paths.map((p, i) => (
                <tr key={i} className={clsx('h-[23px] whitespace-nowrap', i === 0 && 'bg-[#f0f0f0]')}>
                  <td className={clsx('p-0 pl-1.5', line, i === 0 ? 'bg-[#a8e0c2] font-bold' : 'bg-[#f0f0f0]')}>{p && i + 1}</td>
                  <td className={line} />
                  <td className={clsx('overflow-hidden p-0', line)}>{p}</td>
                  {sheets && (
                    <td className={clsx('overflow-hidden p-0 pl-4', line)}>
                      <label className="flex h-[15px] w-[15px] items-center justify-center border border-[#999] bg-white">
                        <input type="checkbox" aria-label="All sheets" defaultChecked className="h-0 w-0 appearance-none" />
                        <svg viewBox="0 0 10 10" className="h-2.5 w-2.5">
                          <path d="M1 4 L4 8 L9 1" fill="none" stroke="#444" strokeWidth="1.3" />
                        </svg>
                      </label>
                    </td>
                  )}
                </tr>
              ))}
            </tbody>
          </table>
        </div>
        <ScrollBar vertical thumb={sheets ? 'h-[18%]' : 'h-[13%]'} />
      </div>
      {sheets && <ScrollBar thumb="w-[67%]" className="mr-[21px]" />}
    </div>
  )
}

const EXCEL = [
  'C:\\Users\\JamesMeenan\\OneDrive - Ideagen plc\\Desktop\\AS9102 -MXpert_rev8.xltx',
  'C:\\Users\\JamesMeenan\\OneDrive - Ideagen plc\\Desktop\\DRT_Draft_REV_A.xltx',
  `${FOLDER}\\AAIG PPAP_V2.xlt`,
  '',
]

const PROJECT = [
  `${FOLDER}\\2_27_23.ixpdot`,
  `${FOLDER}\\700000178020_Robot Arm Link 1_AB_ProjectTempl`,
  `${FOLDER}\\A new Template.ixpdot`,
  `${FOLDER}\\AS9102 (Inches).ixpdot`,
  '',
]

function OptionsDialog() {
  const button = 'flex h-[22px] w-[98px] items-center justify-center gap-1.5 border border-[#c6c6c6] bg-[#f0f0f0]'
  return (
    <div
      role="dialog"
      aria-label="Options"
      className={clsx('absolute top-[337px] left-[504px] w-[1064px] border border-[#666] bg-white leading-4 text-[#111] shadow-[2px_6px_24px_rgba(0,0,0,0.4)]', SEGOE)}
    >
      <div className="flex h-9 items-center pr-[17px] pb-2 pl-2">
        <PuzzleIcon className="h-3.5 w-4" />
        <h2 className="flex-1 pl-1.5 text-[11px]">Options</h2>
        <button aria-label="Help" className="mr-9 text-[13px]">
          ?
        </button>
        <button aria-label="Close">
          <svg viewBox="0 0 12 12" className="h-3 w-3">
            <path d="M1 1 L11 11 M11 1 L1 11" stroke="#111" strokeWidth="1.2" />
          </svg>
        </button>
      </div>
      <div className="flex pr-1.5 pl-[13px]">
        <Tree />
        <div className="flex min-w-0 flex-1 flex-col gap-2 border border-[#777] pt-3.5 pr-3.5 pb-3.5 pl-[15px]">
          <Panel title="File Locations">
            <div className="flex flex-col gap-1.5 pt-[5px] pr-[9px] pb-[9px] pl-2">
              <FolderRow id="project-folder" label="Project templates folder :" />
              <FolderRow id="export-folder" label="Export template folder :" />
            </div>
          </Panel>
          <Panel title="Excel Export Templates">
            <div className="pt-2 pr-2.5 pb-2 pl-2">
              <AddRemove />
              <TemplateGrid paths={EXCEL} sheets />
            </div>
          </Panel>
          <Panel title="Project Templates">
            <div className="pt-2 pr-2.5 pb-2 pl-2">
              <AddRemove />
              <TemplateGrid paths={PROJECT} />
            </div>
          </Panel>
        </div>
      </div>
      <div className={clsx('mx-[5px] mt-1.5 mb-1 flex h-[51px] justify-end gap-[9px] border border-[#c6c6c6] pt-[13px] pr-[13px] text-[10px]', TAHOMA)}>
        <button className={button}>
          <svg viewBox="0 0 14 12" className="h-3 w-3.5">
            <path d="M1 7 L5 11 L13 1" fill="none" stroke="#2ea52e" strokeWidth="2" />
          </svg>
          OK
        </button>
        <button className={button}>
          <svg viewBox="0 0 14 14" className="h-3.5 w-3.5">
            <path d="M2 1 L12 13 M12 1 L2 13" stroke="#c81e1e" strokeWidth="2.4" />
          </svg>
          Cancel
        </button>
        <button className={button}>Apply</button>
      </div>
    </div>
  )
}

/* ---------- walkthrough overlay ---------- */

function Arrow({ from, to }: { from: [number, number]; to: [number, number] }) {
  const length = Math.hypot(to[0] - from[0], to[1] - from[1])
  const angle = (Math.atan2(to[1] - from[1], to[0] - from[0]) * 180) / Math.PI
  return (
    <g transform={`translate(${from[0]} ${from[1]}) rotate(${angle})`}>
      <path d={`M0 0 H${length - 16}`} stroke="#000" strokeWidth="7" strokeLinecap="round" />
      <path d={`M${length} 0 L${length - 23} -10 V10 Z`} />
    </g>
  )
}

export default function App() {
  return (
    <main className="relative flex min-h-screen flex-col bg-white pb-[13px] text-[#111]">
      <p className={clsx('h-[143px] pt-[65px] pl-[502px] whitespace-nowrap', NOTE)}>1) Navigate to the Options window</p>
      <div className="flex flex-1">
        <AppWindow />
        <p className={clsx('w-[370px] shrink-0 pt-[194px] pr-[38px] pl-1 text-center', NOTE)}>3) Select a network folder where you will save your template files</p>
      </div>
      <OptionsDialog />
      <p className={clsx('absolute top-[347px] left-[55px] whitespace-nowrap', NOTE)}>2) Select "Templates"</p>
      <p className={clsx('absolute top-[654px] left-[1600px] w-[260px] text-center', NOTE)}>4) Select "Apply" and "OK"</p>
      <svg className="pointer-events-none absolute inset-0 h-full w-full drop-shadow-[2px_5px_3px_rgba(0,0,0,0.5)]">
        <Arrow from={[1037, 85]} to={[1169, 210]} />
        <Arrow from={[396, 381]} to={[543, 441]} />
        <Arrow from={[1932, 375]} to={[1542, 443]} />
        <Arrow from={[1627, 758]} to={[1557, 938]} />
      </svg>
    </main>
  )
}
